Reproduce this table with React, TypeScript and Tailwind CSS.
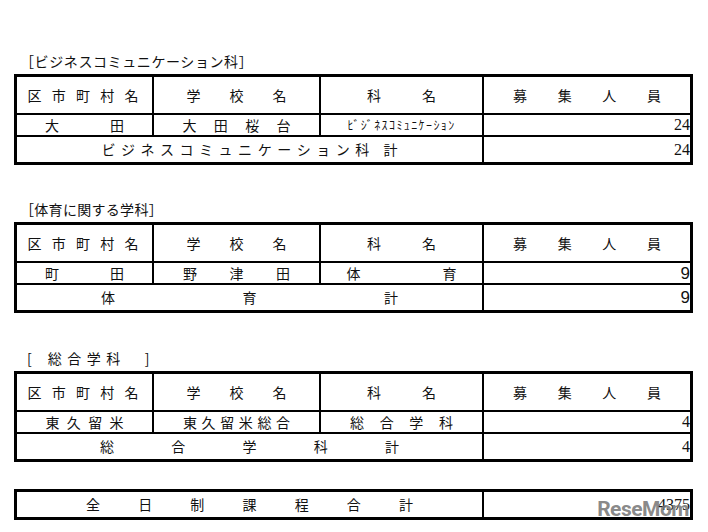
import React from 'react'

type CellText = { text: string; w: string }

interface Section {
  title: React.ReactNode
  titleGap: string
  titlePad: string
  area: CellText
  school: CellText
  dept: React.ReactNode
  count: string
  countFont: string
  total: CellText
}

function Spread({ text, w }: CellText) {
  return (
    <div className={`flex justify-between ${w}`}>
      {Array.from(text).map((ch, i) => (
        <span key={i}>{ch === '　' ? '\u00a0' : ch}</span>
      ))}
    </div>
  )
}

const serif = "font-['Liberation_Serif',serif] text-[16px]"
const sans = "font-['Liberation_Sans',sans-serif] text-[17px]"

const sections: Section[] = [
  {
    title: <span className="tracking-[0.6px]">［ビジネスコミュニケーション科］</span>,
    titleGap: 'mt-0',
    titlePad: 'pl-[6px]',
    area: { text: '大田', w: 'w-[79px]' },
    school: { text: '大田桜台', w: 'w-[108px]' },
    dept: <span className="text-[12px] tracking-[1.4px]">ﾋﾞｼﾞﾈｽｺﾐｭﾆｹｰｼｮﾝ</span>,
    count: '24',
    countFont: serif,
    total: { text: 'ビジネスコミュニケーション科　計', w: 'w-[296px]' },
  },
  {
    title: <span className="tracking-[0.3px]">［体育に関する学科］</span>,
    titleGap: 'mt-[34px]',
    titlePad: 'pl-[6px]',
    area: { text: '町田', w: 'w-[79px]' },
    school: { text: '野津田', w: 'w-[107px]' },
    dept: <Spread text="体育" w="w-[110px]" />,
    count: '9',
    countFont: sans,
    total: { text: '体育計', w: 'w-[297px]' },
  },
  {
    title: (
      <span className="flex">
        <span>[</span>
        <span className="ml-[16px] tracking-[5.5px]">総合学科</span>
        <span className="ml-[19px]">]</span>
      </span>
    ),
    titleGap: 'mt-[35px]',
    titlePad: 'pl-[13px]',
    area: { text: '東久留米', w: 'w-[78px]' },
    school: { text: '東久留米総合', w: 'w-[107px]' },
    dept: <Spread text="総合学科" w="w-[103px]" />,
    count: '4',
    countFont: serif,
    total: { text: '総合学科計', w: 'w-[299px]' },
  },
]

function Header() {
  return (
    <div className="flex h-[38px] border-b-2 border-black text-[14px]">
      <div className="flex w-[137px] items-center justify-center border-r-2 border-black pr-[3px]">
        <Spread text="区市町村名" w="w-[111px]" />
      </div>
      <div className="flex w-[167px] items-center justify-center border-r-2 border-black">
        <Spread text="学校名" w="w-[100px]" />
      </div>
      <div className="flex w-[163px] items-center justify-center border-r-2 border-black">
        <Spread text="科名" w="w-[69px]" />
      </div>
      <div className="flex flex-1 items-center justify-center">
        <Spread text="募集人員" w="w-[148px]" />
      </div>
    </div>
  )
}

function Table({ s }: { s: Section }) {
  return (
    <div className="w-[679px] border-[3px] border-black">
      <Header />
      <div className="flex h-[22px] border-b-2 border-black text-[14px]">
        <div className="flex w-[137px] items-center justify-center border-r-2 border-black">
          <Spread {...s.area} />
        </div>
        <div className="flex w-[167px] items-center justify-center border-r-2 border-black">
          <Spread {...s.school} />
        </div>
        <div className="flex w-[163px] items-center justify-center border-r-2 border-black">
          {s.dept}
        </div>
        <div className={`flex flex-1 items-center justify-end leading-none ${s.countFont}`}>
          {s.count}
        </div>
      </div>
      <div className="flex h-[25px] text-[14px]">
        <div className="flex w-[467px] items-center justify-center border-r-2 border-black">
          <Spread {...s.total} />
        </div>
        <div className={`flex flex-1 items-center justify-end leading-none ${s.countFont}`}>
          {s.count}
        </div>
      </div>
    </div>
  )
}

export default function App() {
  return (
    <div className="min-h-[532px] w-[708px] bg-white pl-[14px] pt-[51px] font-['Noto_Sans_CJK_JP',sans-serif] text-[#111]">
      {sections.map((s, i) => (
        <div key={i} className={s.titleGap}>
          <div className={`mb-[3px] flex h-[20px] items-center text-[14px] leading-[20px] ${s.titlePad}`}>
            {s.title}
          </div>
          <Table s={s} />
        </div>
      ))}

      <div className="relative mt-[27px] flex h-[31px] w-[679px] border-[3px] border-black text-[14px]">
        <div className="flex w-[467px] items-center justify-center border-r-2 border-black">
          <Spread text="全日制課程合計" w="w-[327px]" />
        </div>
        <div className={`flex flex-1 items-center justify-end leading-none ${serif}`}>4375</div>
        <span className="absolute bottom-[-3px] right-[1px] font-['Roboto',sans-serif] text-[21px] font-bold leading-none tracking-[-0.5px] text-[#7a7a7a]/90">
          ReseMom
        </span>
      </div>
    </div>
  )
}
